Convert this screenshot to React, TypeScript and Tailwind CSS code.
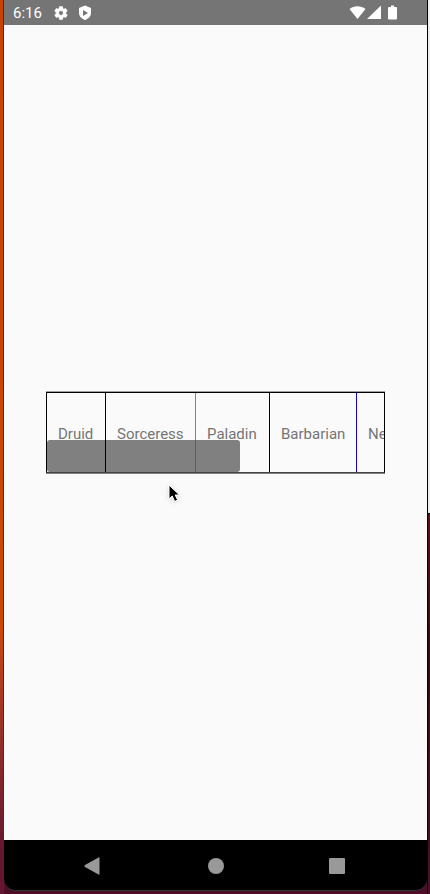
const heroes = [
  { name: "Druid", cell: "w-[59px] border-r border-black" },
  { name: "Sorceress", cell: "w-[90px] border-r border-[#505050]/70" },
  { name: "Paladin", cell: "w-[74px] border-r border-black" },
  { name: "Barbarian", cell: "w-[87px] border-r border-[#1400d0]" },
  { name: "Necromancer", cell: "w-[120px]" },
];

function StatusBar() {
  return (
    <header className="flex h-[25px] shrink-0 items-center bg-[#757575] pr-[30px] pl-[9px] text-white">
      <span className="text-[15px] leading-5">6:16</span>
      <svg className="ml-[11px] size-4" viewBox="0 0 24 24" fill="currentColor" stroke="currentColor" aria-hidden="true">
        <path d="M19.14 12.94c.04-.3.06-.61.06-.94s-.02-.64-.07-.94l2.03-1.58a.49.49 0 0 0 .12-.61l-1.92-3.32a.49.49 0 0 0-.59-.22l-2.39.96a7 7 0 0 0-1.62-.94l-.36-2.54a.48.48 0 0 0-.48-.41h-3.84a.48.48 0 0 0-.47.41l-.36 2.54c-.59.24-1.13.57-1.62.94l-2.39-.96a.48.48 0 0 0-.59.22L2.74 8.87a.48.48 0 0 0 .12.61l2.03 1.58a6 6 0 0 0 0 1.88l-2.03 1.58a.49.49 0 0 0-.12.61l1.92 3.32c.12.22.37.29.59.22l2.39-.96c.5.38 1.03.7 1.62.94l.36 2.54c.05.24.24.41.48.41h3.84c.24 0 .44-.17.47-.41l.36-2.54c.59-.24 1.13-.56 1.62-.94l2.39.96c.22.08.47 0 .59-.22l1.92-3.32a.48.48 0 0 0-.12-.61zM12 15.6a3.6 3.6 0 1 1 0-7.2 3.6 3.6 0 0 1 0 7.2z" />
      </svg>
      <svg className="ml-2 size-4" viewBox="0 0 16 16" aria-hidden="true">
        <path d="M8 .5 14 3v4.800c0 3.400-2.400 6-6 7.200-3.600-1.200-6-3.800-6-7.200V3z" fill="white" />
        <path d="M6 5v6l5-3z" fill="#757575" />
      </svg>
      <svg className="ml-auto h-4 w-[17px]" viewBox="0 0 17 16" fill="currentColor" aria-hidden="true">
        <path d="M.5 4C5 .2 12 .2 16.500 4L8.500 14z" />
      </svg>
      <svg className="ml-px h-4 w-[14px]" viewBox="0 0 14 16" fill="currentColor" aria-hidden="true">
        <path d="M14 .5V14H0z" />
      </svg>
      <svg className="ml-[7px] h-4 w-[9px]" viewBox="0 0 9 16" fill="currentColor" aria-hidden="true">
        <path d="M3 .5h3V2h2q1 0 1 1v10.500q0 1-1 1H1q-1 0-1-1V3q0-1 1-1h2z" />
      </svg>
    </header>
  );
}

function HeroStrip() {
  return (
    <div className="relative mx-[42px] border-y border-t-[#a0a0a0] border-b-[#808080]">
      <div className="relative h-[81px] border border-black border-b-[#444444]">
        <div className="absolute bottom-0 left-0 h-8 w-[193px] rounded-[3px] bg-[#808080]" />
        <ul className="relative flex h-full overflow-hidden">
          {heroes.map((hero) => (
            <li key={hero.name} className={`flex shrink-0 items-center pt-0.5 pl-[11px] text-[15px] leading-5 text-[#757575] ${hero.cell}`}>
              {hero.name}
            </li>
          ))}
        </ul>
      </div>
      <svg className="absolute top-[91px] left-[120px] h-6 w-4 drop-shadow-sm" viewBox="0 0 16 24" aria-hidden="true">
        <path d="M3 2v14l3.200-3 2.500 5.500 3-1.400L9.200 12h4.300z" fill="black" stroke="white" strokeWidth="1" />
      </svg>
    </div>
  );
}

function NavBar() {
  return (
    <nav className="flex h-[51px] shrink-0 items-center justify-between rounded-b-xl border-b border-[#333] bg-black px-[78px] pt-0.5 text-[#999]">
      <button type="button" aria-label="Back">
        <svg className="h-5 w-6" viewBox="0 0 24 20" fill="currentColor" aria-hidden="true">
          <path d="M16.500 1.500q1-.5 1 .5v16q0 1-1 .5L3 11q-1.500-1 0-2z" />
        </svg>
      </button>
      <button type="button" aria-label="Home">
        <svg className="h-5 w-6" viewBox="0 0 24 20" fill="currentColor" aria-hidden="true">
          <circle cx="12" cy="10" r="8" />
        </svg>
      </button>
      <button type="button" aria-label="Overview">
        <svg className="h-5 w-6" viewBox="0 0 24 20" fill="currentColor" aria-hidden="true">
          <rect x="4" y="2" width="16" height="16" rx="1" />
        </svg>
      </button>
    </nav>
  );
}

export default function App() {
  return (
    <div className="flex min-h-screen bg-[#4d0f28] font-[Roboto,sans-serif]">
      <div className="w-1 shrink-0 border-r border-[#8c1000] bg-linear-to-b from-[#c84300] from-0% via-[#cc4900] via-70% to-[#651530] to-95%" />
      <div className="flex min-w-0 flex-1 flex-col pb-[3px]">
        <StatusBar />
        <main className="flex flex-1 flex-col justify-center bg-[#fafafa]">
          <HeroStrip />
        </main>
        <NavBar />
      </div>
      <div className="flex w-[3px] shrink-0 flex-col border-l border-black">
        <div className="h-[514px] shrink-0 border-b border-black bg-[#eeeeee]" />
        <div className="flex-1 bg-linear-to-b from-[#5c1018] from-0% via-[#3c0810] via-35% to-[#4d0f28]" />
      </div>
    </div>
  );
}
